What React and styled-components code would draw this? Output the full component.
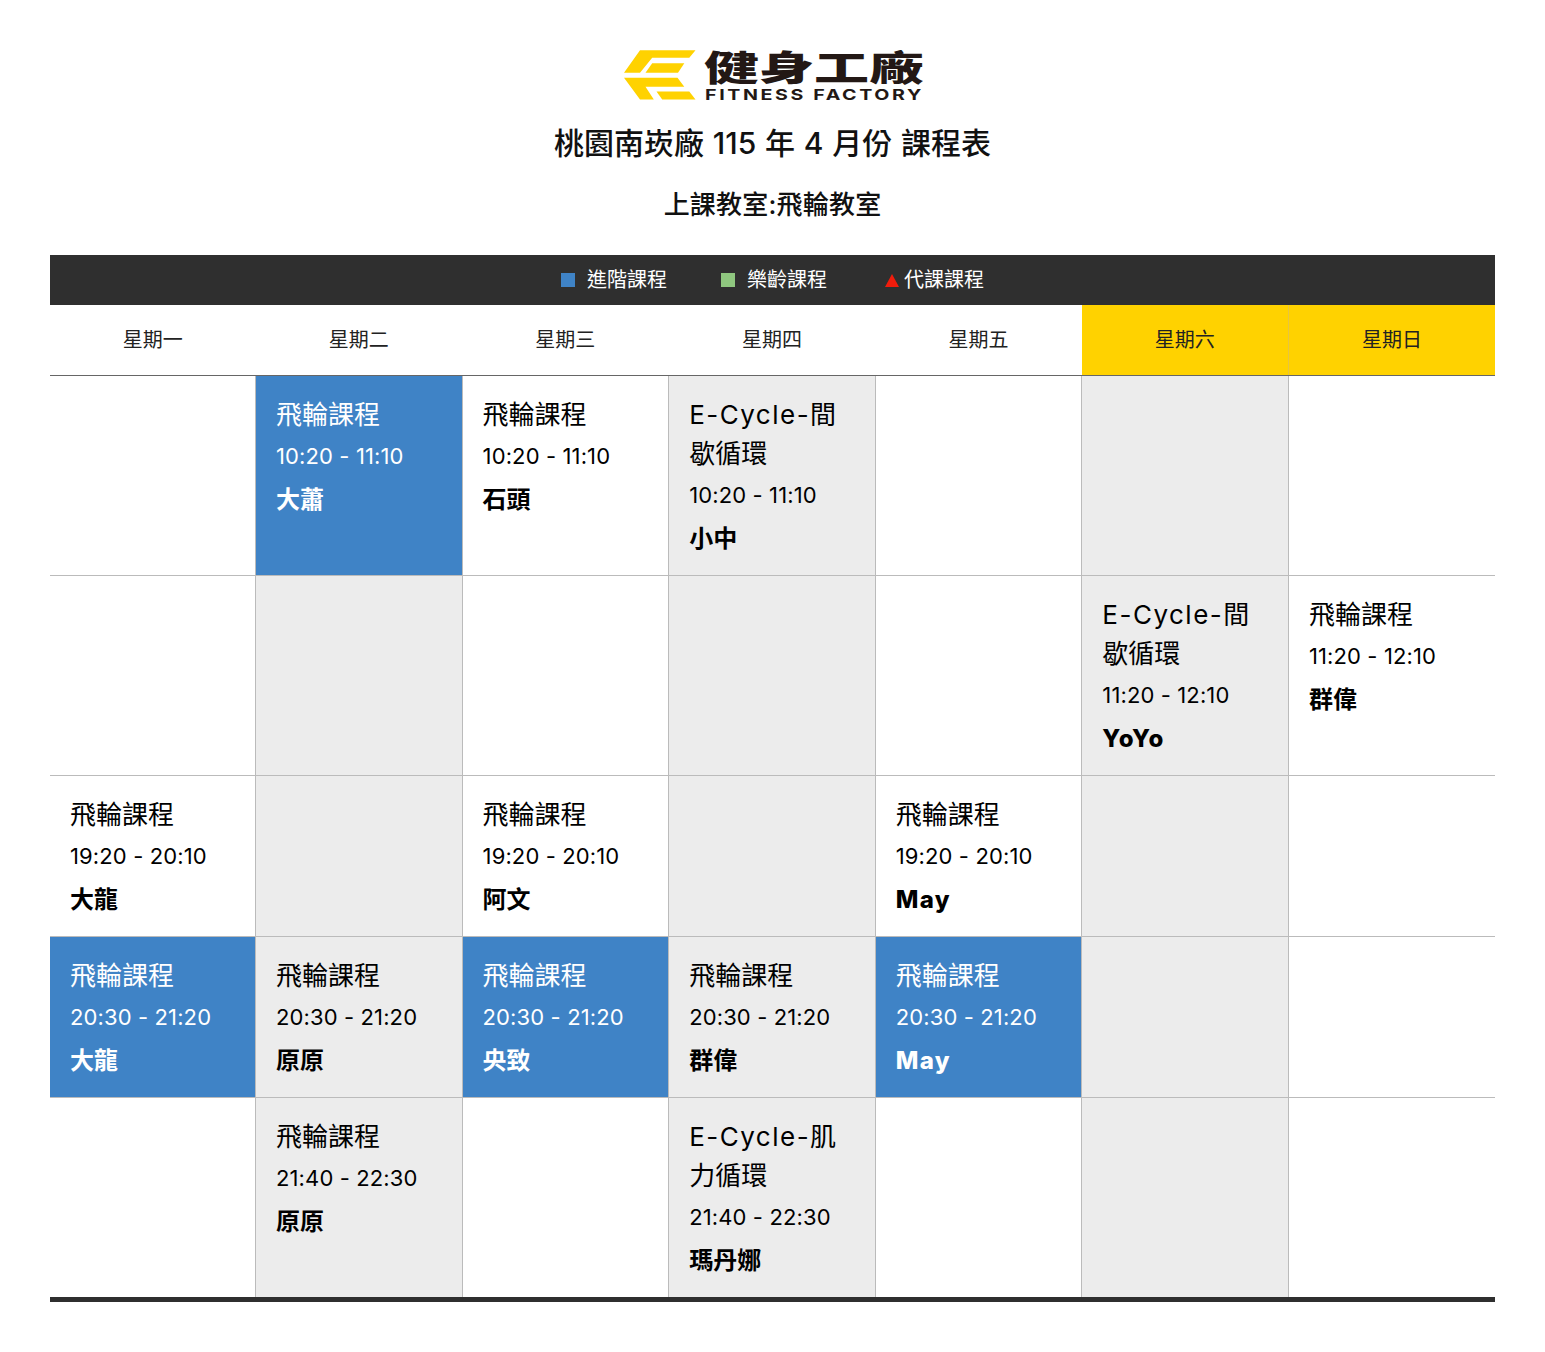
import React from "react";
import styled, { createGlobalStyle } from "styled-components";

const Global = createGlobalStyle`
  html, body { margin: 0; padding: 0; background: #fff; }
  body { font-family: Inter, "Noto Sans CJK TC", sans-serif; color: #000; }
`;

const Page = styled.main`
  width: 1545px;
  height: 1352px;
  padding: 50px 50px 0;
  box-sizing: border-box;
`;
const Brand = styled.header`
  display: flex;
  flex-direction: column;
  align-items: center;
`;
const Logo = styled.svg`
  display: block;
  width: 300px;
  height: 54px;
`;
const Title = styled.h1`
  margin: 16px 0 0;
  font-size: 30px;
  line-height: 46px;
  font-weight: 500;
  word-spacing: 0.8px;
  color: #111;
`;
const Subtitle = styled.h2`
  margin: 16px 0 0;
  font-size: 26px;
  line-height: 46px;
  font-weight: 500;
  letter-spacing: 0.2px;
  color: #111;
`;
const Legend = styled.div`
  margin-top: 27px;
  height: 50px;
  padding-bottom: 3px;
  box-sizing: border-box;
  background: #2f2f2f;
  display: flex;
  align-items: center;
  justify-content: center;
  color: #fff;
  font-size: 20px;
`;
const LegendItem = styled.span`
  display: flex;
  align-items: center;
  gap: ${(p) => p.$gap}px;
  margin-right: ${(p) => p.$after}px;
`;
const Swatch = styled.i`
  display: block;
  width: 14px;
  height: 14px;
  margin-top: 3px;
  background: ${(p) => p.$color};
`;
const Triangle = styled.i`
  display: block;
  width: 0;
  height: 0;
  margin-top: 3px;
  border-left: 7.5px solid transparent;
  border-right: 7.5px solid transparent;
  border-bottom: 13px solid #f01c0c;
`;
const Table = styled.table`
  width: 1445px;
  table-layout: fixed;
  border-collapse: collapse;
  border-bottom: 5px solid #2f2f2f;
`;
const Head = styled.th`
  height: 70px;
  padding: 0 0 2px;
  box-sizing: border-box;
  font-size: 20px;
  font-weight: 400;
  color: #222;
  background: ${(p) => (p.$weekend ? "#ffd200" : "#fff")};
  border-bottom: 1px solid #666;
  border-left: ${(p) => (p.$divide ? "1px solid #e6c440" : "0")};
  &:first-child { width: 205.5px; }
`;
const Cell = styled.td`
  padding: 20px;
  vertical-align: top;
  background: ${(p) => (p.$blue ? "#3f83c6" : p.$grey ? "#ececec" : "#fff")};
  color: ${(p) => (p.$blue ? "#fff" : "#000")};
  border: 1px solid #bbb;
  &:first-child { border-left: 0; }
  &:last-child { border-right: 0; }
  tr:last-child > & { border-bottom: 0; }
`;
const Course = styled.div`
  font-size: 26px;
  line-height: 39px;
  margin-top: -1px;
  padding-bottom: 1px;
`;
const CourseLatin = styled.span`
  letter-spacing: 1.5px;
`;
const Time = styled.div`
  font-size: 22px;
  line-height: 40px;
  padding-top: 1px;
  letter-spacing: 0.12px;
`;
const Coach = styled.div`
  font-size: 24px;
  line-height: 32px;
  padding-top: 8px;
  font-weight: ${(p) => (p.$latin ? 800 : 700)};
  letter-spacing: ${(p) => (p.$latin ? "1.4px" : "0")};
`;

const days = ["星期一", "星期二", "星期三", "星期四", "星期五", "星期六", "星期日"];
const F = ["", "飛輪課程"];
const I = ["E-Cycle-", "間歇循環"];
const M = ["E-Cycle-", "肌力循環"];
const t1 = "10:20 - 11:10", t2 = "11:20 - 12:10", t3 = "19:20 - 20:10", t4 = "20:30 - 21:20", t5 = "21:40 - 22:30";

const rows = [
  [null, { c: F, t: t1, n: "大蕭", blue: 1 }, { c: F, t: t1, n: "石頭" }, { c: I, t: t1, n: "小中" }, null, null, null],
  [null, null, null, null, null, { c: I, t: t2, n: "YoYo" }, { c: F, t: t2, n: "群偉" }],
  [{ c: F, t: t3, n: "大龍" }, null, { c: F, t: t3, n: "阿文" }, null, { c: F, t: t3, n: "May" }, null, null],
  [{ c: F, t: t4, n: "大龍", blue: 1 }, { c: F, t: t4, n: "原原" }, { c: F, t: t4, n: "央致", blue: 1 }, { c: F, t: t4, n: "群偉" }, { c: F, t: t4, n: "May", blue: 1 }, null, null],
  [null, { c: F, t: t5, n: "原原" }, null, { c: M, t: t5, n: "瑪丹娜" }, null, null, null],
];

const greyMap = [
  [0, 0, 0, 1, 0, 1, 0],
  [0, 1, 0, 1, 0, 1, 0],
  [0, 1, 0, 1, 0, 1, 0],
  [0, 1, 0, 1, 0, 1, 0],
  [0, 1, 0, 1, 0, 1, 0],
];

export default function App() {
  return (
    <Page>
      <Global />
      <Brand>
        <Logo viewBox="0 0 300 54" aria-label="健身工廠 Fitness Factory">
          <path fill="#ffd200" d="M17 0.300H72.500L66.300 7.700H29.200L17 22.700H1Z" />
          <path fill="#ffd200" d="M29.200 13.300H61.300L55 22.700H22.500Z" />
          <path fill="#ffd200" d="M1 27.700H54.500L61.300 36.700H22.500L30.800 49.500H17Z" />
          <path fill="#ffd200" d="M33.500 41.500H66.300L72.500 49.500H39.200Z" />
          <text x="81" y="31" textLength="220" lengthAdjust="spacingAndGlyphs" fontFamily="'Noto Sans CJK TC'" fontWeight="900" fontSize="35" fill="#231815">健身工廠</text>
          <text x="82" y="49.500" textLength="219" lengthAdjust="spacingAndGlyphs" fontFamily="Inter" fontWeight="700" fontSize="15" letterSpacing="2" fill="#231815">FITNESS FACTORY</text>
        </Logo>
        <Title>桃園南崁廠 115 年 4 月份 課程表</Title>
        <Subtitle>上課教室:飛輪教室</Subtitle>
      </Brand>
      <Legend>
        <LegendItem $gap={12} $after={54}><Swatch $color="#3f83c6" />進階課程</LegendItem>
        <LegendItem $gap={12} $after={58}><Swatch $color="#8fc77f" />樂齡課程</LegendItem>
        <LegendItem $gap={5} $after={0}><Triangle />代課課程</LegendItem>
      </Legend>
      <Table>
        <thead>
          <tr>
            {days.map((d, i) => (
              <Head key={d} $weekend={i > 4} $divide={i === 6}>{d}</Head>
            ))}
          </tr>
        </thead>
        <tbody>
          {rows.map((r, ri) => (
            <tr key={ri}>
              {r.map((c, ci) => (
                <Cell key={ci} $blue={c && c.blue} $grey={greyMap[ri][ci]}>
                  {c && (
                    <>
                      <Course>
                        {c.c[0] && <CourseLatin>{c.c[0]}</CourseLatin>}
                        {c.c[1]}
                      </Course>
                      <Time>{c.t}</Time>
                      <Coach $latin={/^[A-Za-z]/.test(c.n)}>{c.n}</Coach>
                    </>
                  )}
                </Cell>
              ))}
            </tr>
          ))}
        </tbody>
      </Table>
    </Page>
  );
}
